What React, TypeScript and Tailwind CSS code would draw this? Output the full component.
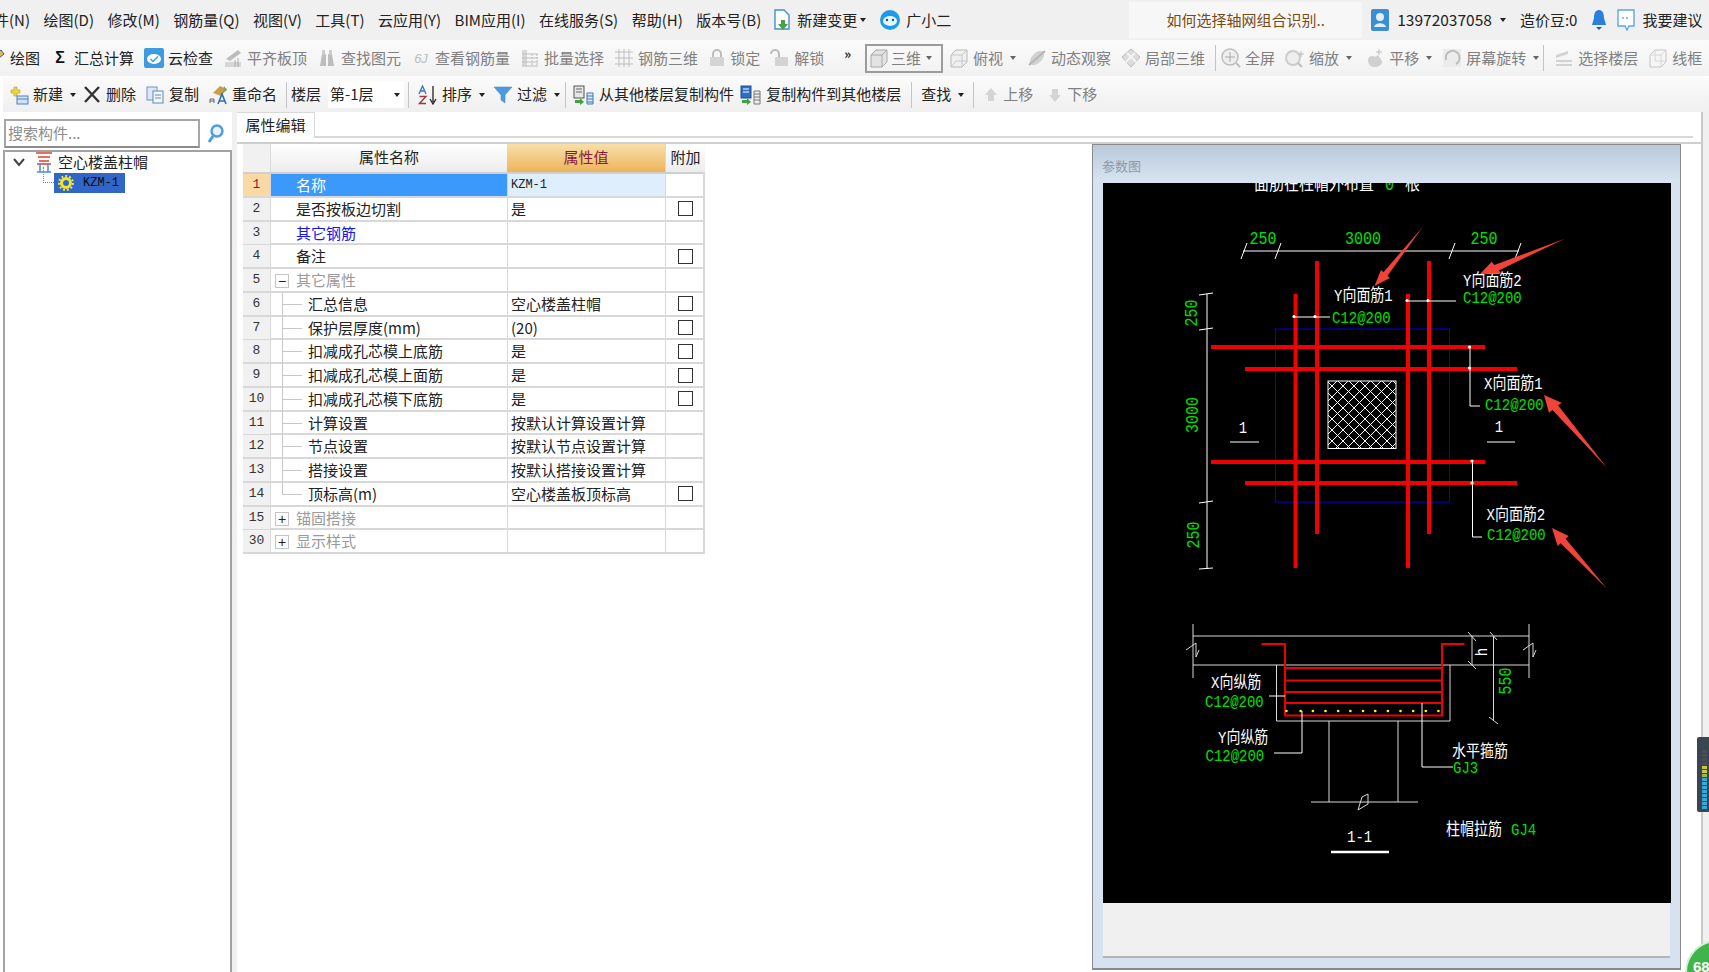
import type { ReactNode } from "react";

const D = "#bdbdbd"; // grey of disabled toolbar icons

const Svg = ({ children, w = 20 }: { children: ReactNode; w?: number }) => (
  <svg width={w} height={20} viewBox={`0 0 ${w} 20`} className="shrink-0">
    {children}
  </svg>
);

const Caret = ({ grey }: { grey?: boolean }) => (
  <span className={`ml-[3px] inline-block h-0 w-0 border-x-[3px] border-t-[4px] border-x-transparent ${grey ? "border-t-[#666]" : "border-t-[#222]"}`} />
);

const icons: Record<string, ReactNode> = {
  pencil: <Svg><path d="M3 16 L5 10 L15 2 L18 6 L8 14 Z" fill="#e9b949" stroke="#3a5a8c" /></Svg>,
  sigma: <Svg><text x="10" y="15" textAnchor="middle" fontSize="16" fontWeight="700" fill="#111" fontFamily="Liberation Sans">Σ</text></Svg>,
  cloud: <Svg><rect x="0" y="0" width="20" height="20" rx="2" fill="#3e9be0" /><ellipse cx="10" cy="11" rx="7" ry="5" fill="#fff" /><path d="M6.5 11 L9 13.5 L14 8.5" fill="none" stroke="#3e9be0" strokeWidth="1.5" /></Svg>,
  plate: <Svg><path d="M3 11 L15 2 L18 5 L7 13 Z" fill={D} /><path d="M2 14 H18 V19 H2 Z" fill="#d6d6d6" /><path d="M12 12 V19 M15 10 V19" stroke="#aaa" /></Svg>,
  bino: <Svg><path d="M3 18 L5 6 H9 V18 Z M11 18 V6 H15 L17 18 Z" fill={D} /><rect x="5" y="2" width="3" height="5" fill="#ccc" /><rect x="12" y="2" width="3" height="5" fill="#ccc" /></Svg>,
  rebar: <Svg><text x="10" y="15" textAnchor="middle" fontSize="13" fill={D} fontFamily="Liberation Sans" fontStyle="italic">6J</text></Svg>,
  batch: <Svg><path d="M2 2 H7 V18 H2 Z" fill="#d8d8d8" /><path d="M2 6 H18 M2 10 H18 M2 14 H18 M2 18 H18" stroke={D} /><path d="M12 6 V18 M17 6 V18" stroke={D} strokeDasharray="2 1" /></Svg>,
  grid3d: <Svg><path d="M1 4 H19 M1 10 H19 M1 16 H19 M5 1 V19 M10 1 V19 M15 1 V19" stroke={D} fill="none" /></Svg>,
  lock: <Svg w={18}><path d="M5 9 V6 a4 4 0 0 1 8 0 V9" fill="none" stroke={D} strokeWidth="2" /><rect x="2" y="9" width="14" height="9" rx="1" fill="#d4d4d4" /></Svg>,
  unlock: <Svg><path d="M1 6 a4 4 0 0 1 8 0 V9" fill="none" stroke={D} strokeWidth="2" /><rect x="5" y="9" width="13" height="9" rx="1" fill="#d4d4d4" /></Svg>,
  cube: <Svg><path d="M2 7 L7 2 H18 V14 L13 19 H2 Z" fill="#e3e3e3" stroke="#a8a8a8" /><path d="M2 7 H13 V19 M13 7 L18 2" fill="none" stroke="#a8a8a8" /></Svg>,
  top: <Svg><path d="M2 7 L7 2 H18 V14 L13 19 H2 Z" fill="#f0f0f0" stroke="#b8b8b8" /><path d="M2 7 H13 V19 M13 7 L18 2 M2 19 L7 13 H18" fill="none" stroke="#c8c8c8" /></Svg>,
  orbit: <Svg><ellipse cx="10" cy="10" rx="5" ry="9" transform="rotate(45 10 10)" fill="#d2d2d2" /><path d="M2 17 L18 3" stroke="#b5b5b5" strokeWidth="2" /></Svg>,
  local: <Svg><path d="M10 1 L19 9 L10 19 L1 9 Z" fill="#dcdcdc" stroke="#bbb" /><path d="M6 5 L15 14 M14 5 L5 14" stroke="#f4f4f4" strokeWidth="2" /></Svg>,
  zoomAll: <Svg><circle cx="9" cy="9" r="8" fill="#eee" stroke={D} strokeWidth="1.5" /><path d="M9 4 V14 M4 9 H14" stroke="#aaa" /><path d="M15 15 L19 19" stroke={D} strokeWidth="2" /></Svg>,
  zoom: <Svg><circle cx="8" cy="10" r="7" fill="#eee" stroke="#ccc" strokeWidth="2" /><path d="M13 15 L17 19" stroke={D} strokeWidth="2" /><path d="M16 3 V9 M13 6 H19" stroke={D} /></Svg>,
  pan: <Svg><path d="M3 12 C3 8 8 7 10 9 L13 7 L17 13 C17 17 14 19 9 19 C5 19 3 16 3 12 Z" fill="#d0d0d0" /><path d="M14 1 V7 M11 4 H17" stroke={D} /></Svg>,
  rotate: <Svg><rect x="1" y="1" width="18" height="18" fill="#ececec" /><path d="M4 12 A7 7 0 1 1 14 16" fill="none" stroke={D} strokeWidth="2" /></Svg>,
  floors: <Svg><path d="M2 7 L14 3 V6 L2 10 Z M2 12 H18 V14 H2 Z M2 16 H18 V18 H2 Z" fill="#d2d2d2" /></Svg>,
  wire: <Svg><path d="M2 7 L7 2 H18 V14 L13 19 H2 Z" fill="#f6f6f6" stroke="#c4c4c4" /><path d="M2 7 H13 V19 M13 7 L18 2 M7 2 V13 H18" fill="none" stroke="#d6d6d6" /></Svg>,
  create: <Svg><path d="M2 5 H5 V2 H8 V5 H11 V8 H8 V11 H5 V8 H2 Z" fill="#f1d34a" stroke="#b99a20" strokeWidth=".6" /><rect x="8" y="11" width="11" height="8" fill="#cfe2f6" stroke="#4c82bd" /><path d="M8 14 H19" stroke="#4c82bd" /></Svg>,
  cross: <Svg><path d="M3 2 L17 17 M17 2 L3 17" stroke="#333" strokeWidth="2.4" /></Svg>,
  copy: <Svg><rect x="2" y="2" width="10" height="13" fill="#dbe8f6" stroke="#6f95c2" /><rect x="8" y="6" width="10" height="12" fill="#f3f7fc" stroke="#5d88bc" /><path d="M10 10 H16 M10 13 H16" stroke="#5d88bc" /></Svg>,
  rename: <Svg><path d="M5 8 L12 1 L19 4 L13 11 Z" fill="#c9a04a" /><path d="M16 1 L19 5 L15 8" fill="#7da35a" /><path d="M2 18 V14 H6 V18 M2 16 H6" fill="none" stroke="#666" /><path d="M10 19 L14 9 L18 19 M11.5 16 H16.5" fill="none" stroke="#2f6fb5" strokeWidth="1.6" /></Svg>,
  sort: <Svg><path d="M1 9 L4.5 1 L8 9 M2.5 6 H6.5" fill="none" stroke="#3a79c1" strokeWidth="1.4" /><path d="M1.5 11.5 H8 L1.5 18.5 H8" fill="none" stroke="#9c3b3b" strokeWidth="1.4" /><path d="M15 1 V17 M12 14 L15 19 L18 14" fill="none" stroke="#222" strokeWidth="1.3" /></Svg>,
  funnel: <Svg><path d="M1 2 H19 L12 10 V18 L8 15 V10 Z" fill="#4d9ae4" stroke="#3b82cc" strokeWidth=".5" /></Svg>,
  fromFloor: <Svg w={22}><rect x="1" y="1" width="10" height="12" fill="#e6e6e6" stroke="#555" /><path d="M3 4 H9 M3 7 H9" stroke="#666" /><path d="M2 15 H7 V13 L11 17 L7 20 V18 H2 Z" fill="#3fa33f" /><path d="M14 8 H20 V19 H14 Z M14 11 H20 M14 14 H20 M14 17 H20" fill="#dfeaf5" stroke="#3f77b5" /></Svg>,
  toFloor: <Svg w={22}><rect x="1" y="1" width="10" height="12" fill="#2f6fc0" stroke="#1e4f92" /><path d="M3 4 H9 M3 7 H9" stroke="#fff" /><path d="M2 15 H7 V13 L11 17 L7 20 V18 H2 Z" fill="#3fa33f" /><path d="M14 6 H20 V19 H14 Z M14 9 H20 M14 12 H20 M14 15 H20" fill="#eee" stroke="#777" /></Svg>,
  up: <Svg w={16}><path d="M8 3 L14 10 H11 V16 H5 V10 H2 Z" fill="#d4d4d4" /></Svg>,
  down: <Svg w={16}><path d="M8 17 L14 10 H11 V4 H5 V10 H2 Z" fill="#d4d4d4" /></Svg>,
};

type ToolProps = { icon?: string; label?: string; off?: boolean; caret?: boolean; className?: string };

const Tool = ({ icon, label, off, caret, className = "" }: ToolProps) => (
  <div className={`flex shrink-0 items-center gap-[4px] whitespace-nowrap ${off ? "text-[#808080]" : "text-[#222]"} ${className}`}>
    {icon && icons[icon]}
    {label && <span>{label}</span>}
    {caret && <Caret grey={off} />}
  </div>
);

const Sep = ({ className = "" }: { className?: string }) => <div className={`h-[26px] w-px shrink-0 bg-[#c4c4c4] ${className}`} />;

const MenuBar = () => (
  <div className="flex h-[40px] items-center bg-[#f0f0f0] text-[15px] text-[#222]">
    <div className="ml-[-6px] flex items-center gap-[13.5px] whitespace-nowrap">
      {["件(N)", "绘图(D)", "修改(M)", "钢筋量(Q)", "视图(V)", "工具(T)", "云应用(Y)", "BIM应用(I)", "在线服务(S)", "帮助(H)", "版本号(B)"].map((m) => (
        <span key={m}>{m}</span>
      ))}
    </div>
    <svg width="18" height="22" viewBox="0 0 18 22" className="ml-[12px] shrink-0">
      <path d="M2 1 H11 L16 6 V20 H2 Z" fill="#fff" stroke="#3f8fd2" strokeWidth="1.4" />
      <path d="M8 11 H12 V15 H15 L10 21 L5 15 H8 Z" fill="#48a23f" />
    </svg>
    <span className="ml-[6px] whitespace-nowrap">新建变更</span>
    <Caret />
    <svg width="22" height="22" viewBox="0 0 22 22" className="ml-[13px] shrink-0">
      <circle cx="11" cy="11" r="10" fill="#1d9be8" />
      <ellipse cx="11" cy="12" rx="7" ry="5" fill="#e8f6ff" />
      <circle cx="8" cy="11" r="1.2" fill="#14568e" />
      <circle cx="14" cy="11" r="1.2" fill="#14568e" />
    </svg>
    <span className="ml-[5px] whitespace-nowrap">广小二</span>
    <div className="ml-[178px] flex h-[36px] w-[233px] shrink-0 items-center justify-center bg-[#f7f7f7] text-[#7b4a12]">如何选择轴网组合识别..</div>
    <div className="ml-[9px] flex items-center whitespace-nowrap">
      <svg width="18" height="22" viewBox="0 0 18 22" className="shrink-0">
        <rect width="18" height="22" rx="2" fill="#3b8ed0" />
        <circle cx="9" cy="8" r="4" fill="#dff0fb" />
        <path d="M3 18 C4 13 14 13 15 18 Z" fill="#dff0fb" />
      </svg>
      <span className="ml-[8px] text-[15.5px]">13972037058</span>
      <span className="ml-[8px] inline-block h-0 w-0 border-x-[3px] border-t-[4px] border-x-transparent border-t-[#222]" />
      <span className="ml-[14px]">造价豆:0</span>
      <svg width="16" height="22" viewBox="0 0 16 22" className="ml-[14px] shrink-0">
        <path d="M8 1 C12 1 13 5 13 9 L15 16 H1 L3 9 C3 5 4 1 8 1 Z" fill="#2a7fdc" />
        <path d="M5 18 H11 L8 21 Z" fill="#1b5fb0" />
      </svg>
      <svg width="20" height="24" viewBox="0 0 20 24" className="ml-[9px] shrink-0">
        <path d="M2 2 H18 V18 H13 L11 22 L9 18 H2 Z" fill="#fff" stroke="#5aa7ea" strokeWidth="1.4" />
        <path d="M6 10 H14" stroke="#3b78c0" strokeDasharray="2 2" />
      </svg>
      <span className="ml-[6px]">我要建议</span>
    </div>
  </div>
);

const ViewBar = () => (
  <div className="flex h-[36px] items-center gap-[10px] overflow-hidden bg-gradient-to-b from-[#fbfbfb] to-[#f1f1f1] text-[15px]">
    <Tool icon="pencil" label="绘图" className="ml-[-14px]" />
    <Tool icon="sigma" label="汇总计算" />
    <Tool icon="cloud" label="云检查" />
    <Tool icon="plate" label="平齐板顶" off />
    <Tool icon="bino" label="查找图元" off />
    <Tool icon="rebar" label="查看钢筋量" off />
    <Tool icon="batch" label="批量选择" off />
    <Tool icon="grid3d" label="钢筋三维" off />
    <Tool icon="lock" label="锁定" off />
    <Tool icon="unlock" label="解锁" off />
    <span className="ml-[10px] mb-[10px] text-[13px] font-bold leading-none text-[#222]">»</span>
    <div className="ml-[4px] flex h-[29px] w-[78px] shrink-0 items-center gap-[2px] border-2 border-[#9c9c9c] pl-[2px] text-[#808080]">
      {icons.cube}
      <span>三维</span>
      <Caret grey />
    </div>
    <Tool icon="top" label="俯视" off caret className="ml-[-4px]" />
    <Tool icon="orbit" label="动态观察" off className="ml-[1px]" />
    <Tool icon="local" label="局部三维" off />
    <Sep />
    <Tool icon="zoomAll" label="全屏" off className="ml-[-5px]" />
    <Tool icon="zoom" label="缩放" off caret />
    <Tool icon="pan" label="平移" off caret className="ml-[3px]" />
    <Tool icon="rotate" label="屏幕旋转" off caret className="ml-[0px]" />
    <Sep className="ml-[-6px]" />
    <Tool icon="floors" label="选择楼层" off />
    <Tool icon="wire" label="线框" off />
  </div>
);

const EditBar = () => (
  <div className="ml-[3px] mt-px flex h-[35px] items-center gap-[9px] bg-gradient-to-b from-[#fbfbfb] to-[#efefef] pl-[6px] text-[15px]">
    <Tool icon="create" label="新建" caret />
    <Tool icon="cross" label="删除" className="ml-[-3px]" />
    <Tool icon="copy" label="复制" />
    <Tool icon="rename" label="重命名" />
    <Sep />
    <span className="ml-[-5px] whitespace-nowrap text-[#222]">楼层</span>
    <div className="ml-[-2px] flex h-[27px] w-[76px] shrink-0 items-center justify-between whitespace-nowrap bg-white pl-[2px] pr-[4px] text-[#222]">
      第-1层
      <Caret />
    </div>
    <Sep className="ml-[-5px]" />
    <Tool icon="sort" label="排序" caret />
    <Tool icon="funnel" label="过滤" caret className="ml-[-1px]" />
    <Sep className="ml-[-4px]" />
    <Tool icon="fromFloor" label="从其他楼层复制构件" className="ml-[-2px]" />
    <Tool icon="toFloor" label="复制构件到其他楼层" className="ml-[-3px]" />
    <Sep className="ml-[1px]" />
    <Tool label="查找" caret />
    <Sep />
    <Tool icon="up" label="上移" off />
    <Tool icon="down" label="下移" off className="ml-[5px]" />
  </div>
);

const Sidebar = () => (
  <div className="flex w-[232px] shrink-0 flex-col">
    <div className="flex items-center pl-[4px] pt-[7px]">
      <div className="flex h-[29px] w-[196px] items-center border-2 border-[#a6a6a6] border-b-[#8c8c8c] pl-[2px] text-[15px] text-[#8c8c8c]">搜索构件...</div>
      <svg width="18" height="20" viewBox="0 0 18 20" className="ml-[7px]">
        <circle cx="10" cy="7" r="5.5" fill="#e8f3fc" stroke="#4f9be0" strokeWidth="2.4" />
        <path d="M6 12 L2 18" stroke="#4f9be0" strokeWidth="3" />
      </svg>
    </div>
    <div className="ml-[3px] mt-[2px] flex-1 border-2 border-b-0 border-[#a2a2a2]">
      <div className="flex h-[20px] items-center pl-[7px]">
        <svg width="14" height="14" viewBox="0 0 14 14" className="shrink-0">
          <path d="M2 4 L7 10 L12 4" fill="none" stroke="#444" strokeWidth="2" />
        </svg>
        <svg width="22" height="22" viewBox="0 0 22 22" className="ml-[8px] shrink-0">
          <path d="M2 2 H18 M4 6 H16 M5 10 H15 M3 13 H17" stroke="#e4705e" strokeWidth="2" />
          <path d="M6 13 V21 M14 13 V21 M3 21 H17" stroke="#4a8fd0" strokeWidth="1.5" />
        </svg>
        <span className="ml-[2px] whitespace-nowrap text-[15px] text-[#222]">空心楼盖柱帽</span>
      </div>
      <div className="relative mt-[1px] h-[20px] w-[71px] translate-x-[49px] bg-[#2f66c8]">
        <div className="flex h-full items-center pl-[4px]">
          <svg width="16" height="16" viewBox="0 0 16 16">
            <circle cx="8" cy="8" r="4.5" fill="none" stroke="#f4e32a" strokeWidth="3" />
            <circle cx="8" cy="8" r="7" fill="none" stroke="#f4e32a" strokeWidth="2" strokeDasharray="2 2" />
          </svg>
          <span className="ml-[9px] font-['Liberation_Mono',monospace] text-[12px] text-[#0a0a0a]">KZM-1</span>
        </div>
        <div className="absolute left-[-11px] top-[-6px] h-[16px] w-[11px] border-b border-l border-dotted border-[#888]" />
      </div>
    </div>
  </div>
);

type Row = { n: number; name: string; value?: string; check?: boolean; kind?: "sel" | "blue" | "open" | "closed" | "child" | "last" };

const rows: Row[] = [
  { n: 1, name: "名称", value: "KZM-1", kind: "sel" },
  { n: 2, name: "是否按板边切割", value: "是", check: true },
  { n: 3, name: "其它钢筋", kind: "blue" },
  { n: 4, name: "备注", check: true },
  { n: 5, name: "其它属性", kind: "open" },
  { n: 6, name: "汇总信息", value: "空心楼盖柱帽", check: true, kind: "child" },
  { n: 7, name: "保护层厚度(mm)", value: "(20)", check: true, kind: "child" },
  { n: 8, name: "扣减成孔芯模上底筋", value: "是", check: true, kind: "child" },
  { n: 9, name: "扣减成孔芯模上面筋", value: "是", check: true, kind: "child" },
  { n: 10, name: "扣减成孔芯模下底筋", value: "是", check: true, kind: "child" },
  { n: 11, name: "计算设置", value: "按默认计算设置计算", kind: "child" },
  { n: 12, name: "节点设置", value: "按默认节点设置计算", kind: "child" },
  { n: 13, name: "搭接设置", value: "按默认搭接设置计算", kind: "child" },
  { n: 14, name: "顶标高(m)", value: "空心楼盖板顶标高", check: true, kind: "last" },
  { n: 15, name: "锚固搭接", kind: "closed" },
  { n: 30, name: "显示样式", kind: "closed" },
];

const ExpandBox = ({ open }: { open: boolean }) => (
  <div className="absolute left-[4px] top-[5px] flex h-[14px] w-[14px] items-center justify-center border border-[#c4c4c4] bg-white font-['Liberation_Sans',sans-serif] text-[14px] leading-none text-[#222]">
    {open ? "−" : "+"}
  </div>
);

const PropRow = ({ r }: { r: Row }) => {
  const sel = r.kind === "sel";
  const child = r.kind === "child" || r.kind === "last";
  const grey = r.kind === "open" || r.kind === "closed";
  const nameColour = sel ? "text-white" : r.kind === "blue" ? "text-[#1414f0]" : grey ? "text-[#9a9a9a]" : "text-[#222]";
  return (
    <div className="grid h-[23.77px] grid-cols-[27px_237px_158px_40px] border-b-2 border-[#d8d8d8] text-[15px] leading-[22px]">
      <div className={`flex items-center justify-center font-['Liberation_Mono',monospace] text-[13px] ${sel ? "bg-[#fbd9a4] text-[#8b1a3a]" : "bg-[#f1f1f1] text-[#333]"}`}>{r.n}</div>
      <div className={`relative whitespace-nowrap border-l border-[#d8d8d8] ${child ? "pl-[37px]" : "pl-[25px]"} ${sel ? "bg-[#3b99fc]" : ""} ${nameColour}`}>
        {r.kind === "open" && <ExpandBox open />}
        {r.kind === "closed" && <ExpandBox open={false} />}
        {child && (
          <>
            <div className={`absolute left-[11px] top-0 w-px bg-[#c8c8c8] ${r.kind === "last" ? "h-[12px]" : "h-[24px]"}`} />
            <div className="absolute left-[11px] top-[11px] h-px w-[20px] bg-[#c8c8c8]" />
          </>
        )}
        {r.name}
      </div>
      <div className={`whitespace-nowrap border-l border-[#d8d8d8] pl-[3px] text-[#222] ${sel ? "bg-[#dfeefc] font-['Liberation_Mono',monospace] text-[12px]" : ""}`}>{r.value}</div>
      <div className="flex items-center justify-center border-l border-[#d8d8d8]">
        {r.check && <div className="h-[15px] w-[15px] border border-[#333] bg-white" />}
      </div>
    </div>
  );
};

const PropTable = () => (
  <div className="ml-[6px] w-[462px] shrink-0 self-start border-r-2 border-[#d8d8d8]">
    <div className="grid h-[30px] grid-cols-[27px_237px_158px_40px] border-b-2 border-[#cfcfcf] text-center text-[15px] leading-[26px]">
      <div className="bg-[#f1f1f1]" />
      <div className="border-l border-[#d8d8d8] bg-gradient-to-b from-white to-[#ececec] text-[#222]">属性名称</div>
      <div className="bg-gradient-to-b from-[#f8dfa8] to-[#edb458] text-[#8b1a3a]">属性值</div>
      <div className="border-l border-[#d8d8d8] bg-gradient-to-b from-white to-[#ececec] text-[#222]">附加</div>
    </div>
    {rows.map((r) => (
      <PropRow key={r.n} r={r} />
    ))}
  </div>
);

const Label = ({ x, y, fill = "#fff", size = 14, anchor, rotate, children }: { x: number; y: number; fill?: string; size?: number; anchor?: "middle"; rotate?: boolean; children: ReactNode }) => (
  <text
    transform={`translate(${x} ${y}) ${rotate ? "rotate(-90) " : ""}scale(1 1.18)`}
    fill={fill}
    fontSize={size}
    textAnchor={anchor}
    className="font-['Liberation_Mono','Noto_Sans_CJK_SC',monospace]"
  >
    {children}
  </text>
);

type P = [number, number];

// tail, tip and the two barb corners of a hand-drawn red arrow
const arrowPoints = (tail: P, tip: P, a: P, b: P) => {
  const mid: P = [(a[0] + b[0]) / 2, (a[1] + b[1]) / 2];
  const inner = (p: P): P => [p[0] + (mid[0] - p[0]) * 0.55, p[1] + (mid[1] - p[1]) * 0.55];
  return [tail, inner(a), a, tip, b, inner(b)].map((p) => p.join(",")).join(" ");
};

const arrows: [P, P, P, P][] = [
  [[1421.6, 226], [1373.5, 285], [1380, 269], [1389, 277]],
  [[1563.7, 237.7], [1479, 273], [1490.7, 260.7], [1500.6, 272.7]],
  [[1606, 466.7], [1543, 394], [1560.6, 401.7], [1548, 411.7]],
  [[1606, 587.7], [1551, 527], [1567.7, 535], [1556.6, 545]],
];

const G = "#00e000";
const dots = [495, 531, 562, 594, 626, 657, 689, 720, 752, 784, 816, 848, 880].map((z) => 1090 + z / 2.533);

const Drawing = () => (
  <svg width={568} height={720} viewBox="1102 182 568 720" className="block shrink-0 bg-black">
    <defs>
      <pattern id="hatch" width="11" height="11" patternUnits="userSpaceOnUse">
        <path d="M0 0 L11 11 M11 0 L0 11" stroke="#fff" strokeWidth="1" />
      </pattern>
    </defs>
    <Label x={1253} y={189} size={15}>面筋在柱帽外布置</Label>
    <Label x={1384} y={189} size={15} fill={G}>0</Label>
    <Label x={1404} y={189} size={15}>根</Label>

    {/* plan: dimensions */}
    <path d="M1242 250 H1518 M1240 258 L1246 242 M1274 258 L1280 242 M1448 258 L1454 242 M1514 258 L1520 242 M1206 293 V568 M1198 294 L1212 292 M1198 329 L1212 327 M1198 502 L1212 500 M1198 568 L1212 567" stroke="#fff" strokeWidth="1" fill="none" />
    <Label x={1262} y={243} fill={G} anchor="middle" size={15}>250</Label>
    <Label x={1362} y={243} fill={G} anchor="middle" size={15}>3000</Label>
    <Label x={1483} y={243} fill={G} anchor="middle" size={15}>250</Label>
    <Label x={1196} y={312} fill={G} anchor="middle" size={15} rotate>250</Label>
    <Label x={1197} y={414} fill={G} anchor="middle" size={15} rotate>3000</Label>
    <Label x={1198} y={534} fill={G} anchor="middle" size={15} rotate>250</Label>

    {/* plan: column cap */}
    <rect x={1274.5} y={328} width={174} height={173} fill="none" stroke="#0000e6" />
    <rect x={1327} y={380} width={68} height={67.5} fill="url(#hatch)" stroke="#fff" />
    <path d="M1210 346 H1484 M1244 368 H1516 M1210 461 H1484 M1244 482 H1516 M1294.5 293 V567 M1316 260 V533 M1407 293 V567 M1428 260 V533" stroke="#f00000" strokeWidth="4" fill="none" />

    {/* plan: leaders */}
    <path d="M1293 316 H1329 M1406 300 H1455 M1469 346 V405 H1479 M1471.5 460 V536 H1481 M1229 441 H1258 M1486 441 H1514" stroke="#fff" strokeWidth="1" fill="none" />
    {[[1293, 315.5], [1314, 315.5], [1406, 299.5], [1427, 299.5], [1468.5, 346], [1468.5, 367], [1471, 460], [1471, 482]].map(([x, y]) => (
      <circle key={`${x}-${y}`} cx={x} cy={y} r={1.6} fill="#fff" />
    ))}
    <Label x={1333} y={300}>Y向面筋1</Label>
    <Label x={1331} y={322} fill={G}>C12@200</Label>
    <Label x={1462} y={285}>Y向面筋2</Label>
    <Label x={1462} y={302} fill={G}>C12@200</Label>
    <Label x={1483} y={388}>X向面筋1</Label>
    <Label x={1484} y={409} fill={G}>C12@200</Label>
    <Label x={1485.5} y={519}>X向面筋2</Label>
    <Label x={1486} y={539} fill={G}>C12@200</Label>
    <Label x={1242} y={432} anchor="middle">1</Label>
    <Label x={1498} y={431} anchor="middle">1</Label>

    {/* section 1-1 */}
    <path d="M1192 623 V677 M1528 623 V677 M1192 635 H1528 M1192 664 H1528 M1275.5 664 V720 H1449 V664 M1328 720 V801 M1397 720 V801 M1310 801 H1417 M1185 649 L1195 642 V656 L1198 649 M1522 649 L1532 642 V656 L1535 649 M1357 809 L1361 796 L1367 793 L1367 803 L1357 809" stroke="#d8d8d8" strokeWidth="1" fill="none" />
    <path d="M1471 635 V664 M1467 631 L1475 640 M1467 660 L1475 668 M1492.5 635 V720 M1489 631 L1496 639 M1488 716 L1497 723" stroke="#d8d8d8" strokeWidth="1" fill="none" />
    <Label x={1486} y={651} anchor="middle" rotate>h</Label>
    <Label x={1510} y={680} fill={G} anchor="middle" size={15} rotate>550</Label>
    <path d="M1260.5 643 H1284 V714.5 H1441 V643 H1463.5 M1284 667 H1441 M1284 679.5 H1441 M1284 691 H1441 M1284 702 H1441" stroke="#f00000" strokeWidth="2" fill="none" />
    {dots.map((x) => (
      <circle key={x} cx={x} cy={710} r={1.3} fill="#ffff00" />
    ))}
    <path d="M1268 695 H1284 M1273 752 H1301 V710 M1421 702 V766 H1452" stroke="#fff" strokeWidth="1" fill="none" />
    <path d="M1330 851 H1388" stroke="#fff" strokeWidth="2.5" />
    <Label x={1210} y={687}>X向纵筋</Label>
    <Label x={1204} y={706} fill={G}>C12@200</Label>
    <Label x={1217} y={742}>Y向纵筋</Label>
    <Label x={1204.5} y={760} fill={G}>C12@200</Label>
    <Label x={1451} y={756}>水平箍筋</Label>
    <Label x={1452} y={772} fill={G}>GJ3</Label>
    <Label x={1445} y={834}>柱帽拉筋</Label>
    <Label x={1510} y={834} fill={G}>GJ4</Label>
    <Label x={1346} y={841}>1-1</Label>

    {arrows.map(([tail, tip, a, b]) => (
      <polygon key={tail.join()} points={arrowPoints(tail, tip, a, b)} fill="#f0433a" />
    ))}
  </svg>
);

const ParamPanel = () => (
  <div className="flex h-[826px] w-[589px] shrink-0 flex-col border border-[#8a8a8a] border-b-2 bg-[#d6e2ef] px-[10px] pb-[10px]">
    <div className="-mx-[10px] flex h-[38px] shrink-0 items-end bg-gradient-to-b from-[#b9cadb] to-[#d8e4f1] pb-[8px] pl-[9px] text-[13px] text-[#8e9aa5]">参数图</div>
    <Drawing />
    <div className="flex-1 border-b-2 border-[#b4b4b4] bg-[#f0f0f0]" />
  </div>
);

const Meter = () => (
  <div className="absolute right-0 top-[737px] flex h-[75px] w-[12px] flex-col items-center justify-end gap-px rounded-l-[2px] bg-[#3a4552] py-[3px] pl-[2px]">
    {["#4a4f55", "#4a4f55", "#4a4f55", "#4a4f55", "#c7c64a", "#c7c64a", "#9ab84a", "#35a8d8", "#35a8d8", "#35a8d8", "#35a8d8", "#35a8d8", "#35a8d8", "#35a8d8", "#35a8d8"].map((c, i) => (
      <div key={i} className="h-[3px] w-[5px]" style={{ backgroundColor: c }} />
    ))}
  </div>
);

const Badge = () => (
  <div className="absolute left-[1685px] top-[940px] flex h-[64px] w-[64px] justify-start rounded-full border-2 border-[#d9efd9] bg-[#3eb54a] pl-[6px] pt-[14px] font-['Liberation_Sans',sans-serif] text-[15px] font-bold text-white">
    68
  </div>
);

export default function App() {
  return (
    <div className="relative h-[972px] w-[1709px] overflow-hidden bg-white font-['Noto_Sans_CJK_SC',sans-serif]">
      <MenuBar />
      <ViewBar />
      <EditBar />
      <div className="flex h-[860px] bg-white">
        <Sidebar />
        <div className="flex flex-1 flex-col bg-[#f0f0f0] pl-[5px]">
          <div className="flex h-[30px] shrink-0 bg-white pr-[8px]">
            <div className="flex h-[26px] w-[78px] items-center justify-center border-r border-t border-[#d8d8d8] bg-white text-[15px] text-[#222]">属性编辑</div>
            <div className="mb-[4px] flex-1 border-b-2 border-[#d8d8d8]" />
          </div>
          <div className="flex flex-1 justify-between border-t-2 border-[#cfcfcf] bg-white pb-[4px] pr-[20px]">
            <PropTable />
            <ParamPanel />
          </div>
        </div>
        <div className="w-[8px] shrink-0 border-l-2 border-[#c8c8c8] bg-[#f0f0f0]" />
      </div>
      <Meter />
      <Badge />
    </div>
  );
}
